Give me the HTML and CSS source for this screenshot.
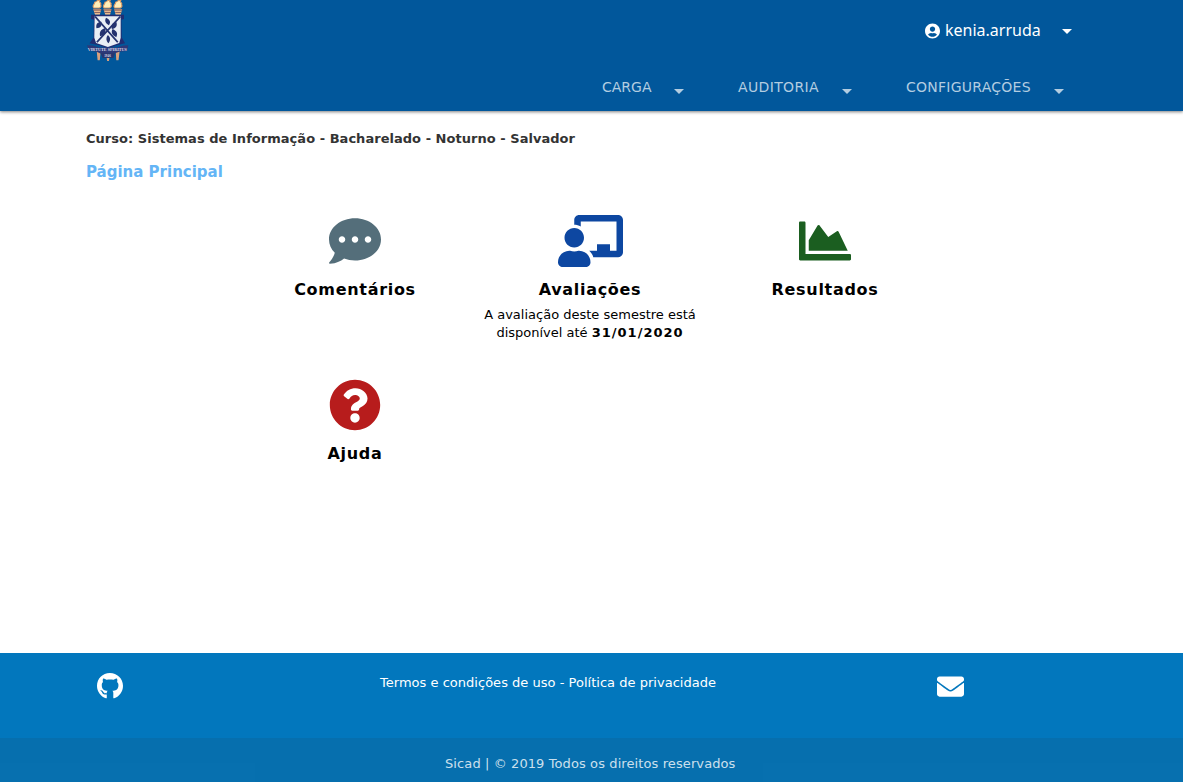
FILE: index.html
```html
<!DOCTYPE html>
<html lang="pt-BR">
<head>
<meta charset="utf-8">
<title>Sicad</title>
<link rel="stylesheet" href="styles.css">
</head>
<body>
<header class="header">
  <div class="topbar">
    <svg class="crest" viewBox="0 0 192 198" aria-label="UFBA">
      <g transform="translate(-10 0) scale(1.1 .97)">
      <g fill="#e9b98d"><path d="M56 28h22l-4 18H61zM84 28h22l-4 18H89zM113 28h22l-4 18h-14z"/></g>
      <g fill="#fff0b9" stroke="#dc9a65" stroke-width="3"><path d="M58 25c-7-9 3-10 2-18 7-1 4-7 14-6-5 6 7 8 2 14 4 4-1 8-3 10zM86 25c-7-9 3-10 2-18 7-1 4-7 14-6-5 6 7 8 2 14 4 4-1 8-3 10zM115 25c-7-9 3-10 2-18 7-1 4-7 14-6-5 6 7 8 2 14 4 4-1 8-3 10z"/></g>
      <path fill="none" stroke="#694b59" stroke-width="3" d="M56 31h23M84 31h23M113 31h23M59 39h17M87 39h17M116 39h17"/>
      <path fill="#202e73" d="M50 46h90v13l-7 2 1 55 9 18-23 6-23 9-26-9-25-6 11-18 1-55-8-2z"/>
      <path fill="#e9eff5" d="M60 50h71v67l-4 16-31 12-32-12-5-16z"/>
      <path fill="none" stroke="#24336f" stroke-width="5" d="M61 51l62 80M130 51L66 131"/>
      <g fill="#24336f"><path d="M78 67c-12 1-15 9-13 20 11 0 16-7 13-20zM91 55c-5 10-1 18 8 23 6-9 3-17-8-23zM119 68c-11 2-15 11-12 22 11-2 16-11 12-22zM88 87c-12 4-16 13-13 25 12-3 18-13 13-25zM109 90c-5 9-2 19 10 25 5-11 2-18-10-25zM96 108c-6 8-5 18 1 26 7-8 7-18-1-26z"/></g>
      <path fill="#d8a17e" d="M65 151h12l-3 35h-6zM91 166h11l-3 23h-5zM117 151h12l-4 35h-6z"/>
      <path fill="#2d3979" d="M39 140l16 1 17 6h50l16-6 14-1-4 18-21 2-19 8H81l-16-8-20-4z"/>
      <text class="motto" x="41" y="158" textLength="107" lengthAdjust="spacingAndGlyphs">VIRTUTE SPIRITUS</text>
      <path fill="#29366f" d="M76 165h40l-5 14H82z"/>
      <text class="year" x="86" y="175">1946</text>
      </g>
    </svg>
    <div class="user">
      <svg class="user-icon" viewBox="0 0 496 512"><path d="M248 8C111 8 0 119 0 256s111 248 248 248 248-111 248-248S385 8 248 8zm0 96c48.6 0 88 39.4 88 88s-39.4 88-88 88-88-39.4-88-88 39.4-88 88-88zm0 344c-58.7 0-111.3-26.6-146.5-68.2 18.8-35.4 55.6-59.8 98.5-59.8 2.4 0 4.8.4 7.1 1.1 13 4.2 26.6 6.9 40.9 6.9 14.3 0 28-2.7 40.9-6.9 2.3-.7 4.7-1.1 7.1-1.1 42.9 0 79.7 24.4 98.5 59.8C359.3 421.4 306.7 448 248 448z"/></svg>
      <span class="user-name">kenia.arruda</span>
      <i class="caret"></i>
    </div>
  </div>
  <nav class="nav">
    <a class="nav-item"><span class="nav-carga">CARGA</span><i class="caret"></i></a>
    <a class="nav-item"><span class="nav-auditoria">AUDITORIA</span><i class="caret"></i></a>
    <a class="nav-item"><span class="nav-config">CONFIGURAÇÕES</span><i class="caret"></i></a>
  </nav>
</header>
<main class="main">
  <p class="course">Curso: Sistemas de Informação - Bacharelado - Noturno - Salvador</p>
  <h1 class="title">Página Principal</h1>
  <div class="cards">
    <section class="card">
      <svg class="icon comments" viewBox="0 0 512 512"><path d="M256 32C114.6 32 0 125.1 0 240c0 49.6 21.4 95 57 130.7C44.500 421.100 2.700 466 2.200 466.500c-2.200 2.300-2.800 5.700-1.500 8.700S4.800 480 8 480c66.300 0 116-31.800 140.600-51.400 32.700 12.300 69 19.400 107.400 19.400 141.400 0 256-93.100 256-208S397.400 32 256 32zM128 272c-17.700 0-32-14.300-32-32s14.300-32 32-32 32 14.300 32 32-14.300 32-32 32zm128 0c-17.700 0-32-14.300-32-32s14.300-32 32-32 32 14.300 32 32-14.300 32-32 32zm128 0c-17.700 0-32-14.300-32-32s14.300-32 32-32 32 14.300 32 32-14.300 32-32 32z"/></svg>
      <h2 class="card-title">Comentários</h2>
    </section>
    <section class="card">
      <svg class="icon icon-wide reviews" viewBox="0 0 640 512"><path d="M208 352c-2.390 0-4.780.35-7.060 1.090C187.980 357.300 174.350 360 160 360c-14.350 0-27.980-2.700-40.950-6.910-2.280-.74-4.660-1.090-7.050-1.090C49.940 352-.33 402.480 0 464.620.14 490.880 21.730 512 48 512h224c26.270 0 47.860-21.120 48-47.380.33-62.140-49.940-112.620-112-112.620zm-48-32c53.020 0 96-42.980 96-96s-42.980-96-96-96-96 42.980-96 96 42.980 96 96 96zM592 0H208c-26.470 0-48 22.250-48 49.590V96c23.420 0 45.100 6.780 64 17.800V64h352v288h-64v-64H384v64h-76.240c19.100 16.690 33.120 38.730 39.690 64H592c26.470 0 48-22.250 48-49.590V49.590C640 22.250 618.470 0 592 0z"/></svg>
      <h2 class="card-title">Avaliações</h2>
      <p class="card-text">A avaliação deste semestre está<br>disponível até <b class="deadline">31/01/2020</b></p>
    </section>
    <section class="card">
      <svg class="icon results" viewBox="0 0 512 512"><path d="M500 384c6.600 0 12 5.400 12 12v40c0 6.600-5.400 12-12 12H12c-6.600 0-12-5.400-12-12V76c0-6.600 5.400-12 12-12h40c6.600 0 12 5.400 12 12v308h436zM372.700 159.500L288 216l-85.300-113.700c-5.100-6.800-15.500-6.300-19.900 1L96 248v104h384l-89.900-187.800c-3.200-6.500-11.400-8.700-17.400-4.700z"/></svg>
      <h2 class="card-title">Resultados</h2>
    </section>
    <section class="card">
      <svg class="icon help" viewBox="0 0 512 512"><path d="M504 256c0 136.997-111.043 248-248 248S8 392.997 8 256C8 119.083 119.043 8 256 8s248 111.083 248 248zM262.655 90c-54.497 0-89.255 22.957-116.549 63.758-3.536 5.286-2.353 12.415 2.715 16.258l34.699 26.310c5.205 3.947 12.621 3.008 16.665-2.122 17.864-22.658 30.113-35.797 57.303-35.797 20.429 0 45.698 13.148 45.698 32.958 0 14.976-12.363 22.667-32.534 33.976C247.128 238.528 216 254.941 216 296v4c0 6.627 5.373 12 12 12h56c6.627 0 12-5.373 12-12v-1.333c0-28.462 83.186-29.647 83.186-106.667 0-58.002-60.165-102-116.531-102zM256 338c-25.365 0-46 20.635-46 46 0 25.364 20.635 46 46 46s46-20.636 46-46c0-25.365-20.635-46-46-46z"/></svg>
      <h2 class="card-title">Ajuda</h2>
    </section>
  </div>
</main>
<footer class="footer">
  <div class="footer-main">
    <svg class="github" viewBox="0 0 496 512"><path d="M165.900 397.400c0 2-2.300 3.600-5.200 3.600-3.300.3-5.600-1.300-5.600-3.600 0-2 2.300-3.600 5.200-3.600 3-.3 5.600 1.300 5.600 3.600zm-31.100-4.500c-.7 2 1.300 4.300 4.300 4.900 2.600 1 5.600 0 6.200-2s-1.300-4.300-4.300-5.200c-2.600-.7-5.500.3-6.200 2.300zm44.200-1.700c-2.900.7-4.900 2.600-4.600 4.900.3 2 2.900 3.300 5.900 2.600 2.900-.7 4.900-2.600 4.600-4.600-.3-1.900-3-3.200-5.900-2.900zM244.800 8C106.100 8 0 113.300 0 252c0 110.900 69.800 205.800 169.500 239.200 12.800 2.300 17.300-5.600 17.300-12.100 0-6.200-.3-40.400-.3-61.400 0 0-70 15-84.700-29.800 0 0-11.400-29.100-27.800-36.600 0 0-22.900-15.700 1.600-15.400 0 0 24.900 2 38.600 25.800 21.900 38.600 58.600 27.500 72.900 20.900 2.300-16 8.800-27.100 16-33.700-55.900-6.200-112.300-14.300-112.300-110.500 0-27.500 7.600-41.300 23.600-58.900-2.600-6.500-11.100-33.300 2.600-67.900 20.900-6.500 69 27 69 27 20-5.600 41.500-8.500 62.800-8.500s42.800 2.900 62.800 8.500c0 0 48.100-33.600 69-27 13.700 34.700 5.200 61.400 2.600 67.900 16 17.700 25.800 31.500 25.800 58.900 0 96.500-58.900 104.200-114.800 110.500 9.200 7.900 17 22.900 17 46.400 0 33.700-.3 75.400-.3 83.600 0 6.500 4.600 14.400 17.300 12.100C428.200 457.800 496 362.900 496 252 496 113.300 383.500 8 244.800 8z"/></svg>
    <p class="terms">Termos e condições de uso - Política de privacidade</p>
    <svg class="mail" viewBox="0 0 512 512"><path d="M502.300 190.800c3.900-3.100 9.700-.2 9.700 4.700V400c0 26.500-21.500 48-48 48H48c-26.500 0-48-21.500-48-48V195.600c0-5 5.700-7.800 9.700-4.700 22.400 17.400 52.100 39.500 154.100 113.600 21.100 15.400 56.700 47.800 92.200 47.600 35.700.3 72-32.800 92.300-47.600 102-74.100 131.600-96.300 154-113.700zM256 320c23.200.4 56.600-29.200 73.400-41.400 132.700-96.300 142.800-104.700 173.400-128.700 5.800-4.500 9.200-11.500 9.200-18.900v-19c0-26.500-21.500-48-48-48H48c-26.500 0-48 21.500-48 48v19c0 7.400 3.400 14.300 9.200 18.900 30.600 23.900 40.700 32.400 173.400 128.700 16.800 12.200 50.200 41.800 73.400 41.400z"/></svg>
  </div>
  <div class="copyright">Sicad | © 2019 Todos os direitos reservados</div>
</footer>
</body>
</html>
```
FILE: styles.css
```css
* { box-sizing: border-box; }
body {
  margin: 0;
  height: 782px;
  display: flex;
  flex-direction: column;
  background: #fff;
  font-family: Verdana, "DejaVu Sans", sans-serif;
  font-size: 13px;
  white-space: nowrap;
  overflow: hidden;
}
h1, h2, p { margin: 0; }
.header {
  height: 111px;
  background: #01579b;
  color: #fff;
  box-shadow: 0 1px 3px rgba(0, 0, 0, .5);
}
.topbar {
  height: 64px;
  padding: 0 111px 0 76px;
  display: flex;
  justify-content: space-between;
}
.crest { width: 64px; height: 66px; }
.motto { font: bold 15px "Liberation Serif", serif; fill: #d9dceb; }
.year { font: bold 9px "Liberation Serif", serif; fill: #d9dceb; }
.user { display: flex; align-items: center; height: 61px; }
.user-icon { width: 15px; height: 16px; margin-right: 5px; fill: #fff; }
.user-name { font: 16px/24px "Noto Sans", sans-serif; width: 96px; margin-top: -2px; }
.caret {
  border: 5px solid transparent;
  border-top-color: currentColor;
  border-bottom: 0;
  margin-left: 21px;
}
.user .caret { margin-top: 2px; }
.nav {
  display: flex;
  padding-left: 602px;
  gap: 54px;
  height: 47px;
  color: #b3cde1;
  font-size: 14px;
}
.nav-item { display: flex; align-items: center; height: 46px; }
.nav-item .caret { margin-top: 8px; }
.nav-carga { width: 51px; }
.nav-auditoria { width: 83px; letter-spacing: .35px; }
.nav-config { width: 127px; letter-spacing: .25px; }
.main { flex: 1; padding: 18px 86px 0; }
.course { font-weight: bold; line-height: 20px; letter-spacing: .03px; color: #333; }
.title { margin-top: 12px; font-size: 15px; line-height: 22px; color: #64b5f6; }
.cards {
  display: grid;
  grid-template-columns: repeat(3, 235px);
  grid-template-rows: 164px 164px;
  margin: 31.5px 0 0 151.5px;
}
.card { display: flex; flex-direction: column; align-items: center; }
.icon { width: 52px; height: 52px; flex: none; }
.icon-wide { width: 65px; }
.comments { fill: #546e7a; }
.reviews { fill: #0d47a1; }
.results { fill: #1b5e20; }
.help { fill: #b71c1c; }
.card-title { margin-top: 12px; font-size: 16px; line-height: 22px; letter-spacing: .7px; color: #000; }
.card-text { margin-top: 5px; line-height: 18px; text-align: center; }
.deadline { letter-spacing: 1px; }
.footer { background: #0277bd; color: #fff; }
.footer-main {
  height: 85px;
  padding: 19px 219px 0 97px;
  display: grid;
  grid-template-columns: 283px 1fr 27px;
}
.github { width: 26px; height: 28px; fill: #fff; }
.mail { width: 27px; height: 27px; margin-top: 1px; fill: #fff; }
.terms { padding-top: 1px; line-height: 20px; letter-spacing: .02px; }
.copyright {
  height: 44px;
  padding: 16px 0 0 445px;
  line-height: 20px;
  letter-spacing: .1px;
  background: rgba(51, 51, 51, .1);
  color: rgba(255, 255, 255, .8);
}
```
